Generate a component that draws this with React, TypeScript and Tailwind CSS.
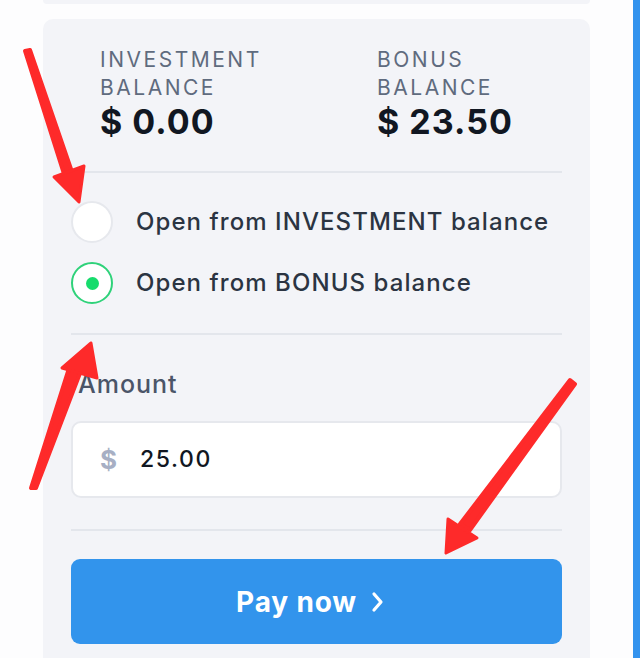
import React from "react";

export default function App() {
  return (
    <div className="relative w-[640px] h-[658px] overflow-hidden bg-[#fdfdfe] flex font-['Inter',sans-serif]">
      <div className="w-[590px] pl-[43px] flex flex-col">
        <div className="h-[4px] rounded-b-[10px] bg-[#f3f4f8]" />
        <div className="mt-[15px] flex-1 rounded-t-[10px] bg-[#f3f4f8] px-[28px]">
          <div className="grid grid-cols-[277px_1fr] px-[29px] pt-[27px] pb-[29px]">
            <div>
              <div className="text-[21px] leading-[28px] tracking-[0.12em] text-[#5f6b7e]">
                INVESTMENT
                <br />
                BALANCE
              </div>
              <div className="text-[34px] leading-[40px] font-bold tracking-[0.03em] text-[#111722]">$ 0.00</div>
            </div>
            <div>
              <div className="text-[21px] leading-[28px] tracking-[0.12em] text-[#5f6b7e]">
                BONUS
                <br />
                BALANCE
              </div>
              <div className="text-[34px] leading-[40px] font-bold tracking-[0.03em] text-[#111722]">$ 23.50</div>
            </div>
          </div>
          <div className="h-[2px] bg-[#e3e6ec]" />
          <div className="flex flex-col gap-[19px] pt-[28px] pb-[29px]">
            <div className="flex items-center gap-[23px]">
              <div className="w-[42px] h-[42px] rounded-full bg-white border-2 border-[#e6e8ed]" />
              <span className="text-[24px] font-medium tracking-[0.045em] text-[#2b3442]">Open from INVESTMENT balance</span>
            </div>
            <div className="flex items-center gap-[23px]">
              <div className="w-[42px] h-[42px] rounded-full bg-white border-2 border-[#2fd27a] flex items-center justify-center">
                <div className="w-[13px] h-[13px] rounded-full bg-[#16dc6c]" />
              </div>
              <span className="text-[24px] font-medium tracking-[0.045em] text-[#2b3442]">Open from BONUS balance</span>
            </div>
          </div>
          <div className="h-[2px] bg-[#e3e6ec]" />
          <div className="pt-[33px] pb-[21px] pl-[7px] text-[25px] leading-[32px] font-medium tracking-[0.04em] text-[#4b5568]">Amount</div>
          <div className="h-[77px] rounded-[10px] bg-white border-2 border-[#e6e8ed] flex items-center pl-[27px] gap-[23px]">
            <span className="text-[26px] font-bold text-[#a7afc4]">$</span>
            <span className="text-[23px] font-medium tracking-[0.07em] text-[#111722]">25.00</span>
          </div>
          <div className="mt-[31px] h-[2px] bg-[#e3e6ec]" />
          <button className="mt-[28px] w-full h-[85px] rounded-[9px] bg-[#3294ec] flex items-center justify-center gap-[14px] pr-[12px] text-white text-[28px] font-bold tracking-[0.03em]">
            <span>Pay now</span>
            <svg width="14" height="22" viewBox="0 0 14 22" fill="none">
              <path d="M3 3 L10 11 L3 19" stroke="white" strokeWidth="3.2" strokeLinecap="round" strokeLinejoin="round" />
            </svg>
          </button>
        </div>
      </div>
      <div className="flex-1" />
      <div className="w-[7px] bg-[#3393ee]" />
      <svg className="absolute inset-0 pointer-events-none" width="640" height="658" viewBox="0 0 640 658">
        <g fill="#fe2a2a" stroke="#fe2a2a" strokeLinejoin="round" strokeLinecap="round">
          <polygon points="25,51 30,50 72,172 64,174" strokeWidth="4" />
          <polygon points="54,177 84,166 79,202" strokeWidth="3" />
          <polygon points="31,488 36,488 82,368 70,365" strokeWidth="4" />
          <polygon points="91,343 62,368 97,378" strokeWidth="3" />
          <polygon points="570,380 575,384 470,530 460,524" strokeWidth="4" />
          <polygon points="446,553 448,519 477,538" strokeWidth="3" />
        </g>
      </svg>
    </div>
  );
}
